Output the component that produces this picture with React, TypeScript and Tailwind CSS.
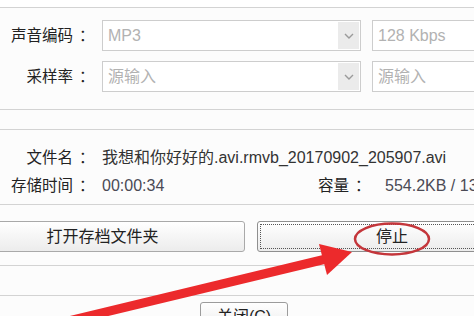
import React from 'react';

const font = { fontFamily: '"Liberation Sans", "Noto Sans CJK SC", sans-serif' };

const Chevron: React.FC = () => (
  <svg width="10" height="6" viewBox="0 0 10 6" fill="none">
    <path d="M1 1l4 4 4-4" stroke="#9a9a9a" strokeWidth="1.4" />
  </svg>
);

interface SelectProps {
  value: string;
  width: string;
  arrow?: boolean;
}

const FakeSelect: React.FC<SelectProps> = ({ value, width, arrow }) => (
  <div className={`${width} h-[31px] shrink-0 flex items-center border border-[#cdcdcd] bg-white`}>
    <span className="flex-1 pl-[5px] text-[16px] text-[#b2b2b2] whitespace-nowrap">{value}</span>
    {arrow && (
      <div className="w-[21px] h-[27px] mr-[1px] flex items-center justify-center bg-[#ebebeb]">
        <Chevron />
      </div>
    )}
  </div>
);

const Label: React.FC<{ text: string }> = ({ text }) => (
  <div className="w-[94px] shrink-0 flex justify-end text-[15.5px] text-[#222] whitespace-nowrap">
    <span>{text}</span>
    <span className="ml-[6px] w-[15px]">：</span>
  </div>
);

const App: React.FC = () => {
  return (
    <div className="relative w-[474px] h-[316px] overflow-hidden bg-[#fcfcfc]" style={font}>
      {/* top strip */}
      <div className="h-[8px] border-b border-[#d3d3d3] bg-white" />

      {/* audio settings */}
      <div className="h-[102px] border-b border-[#d3d3d3] pt-[12px] flex flex-col gap-[10px]">
        <div className="flex items-center">
          <Label text="声音编码" />
          <div className="ml-[8px] flex gap-[11px]">
            <FakeSelect value="MP3" width="w-[259px]" arrow />
            <FakeSelect value="128 Kbps" width="w-[140px]" />
          </div>
        </div>
        <div className="flex items-center">
          <Label text="采样率" />
          <div className="ml-[8px] flex gap-[11px]">
            <FakeSelect value="源输入" width="w-[259px]" arrow />
            <FakeSelect value="源输入" width="w-[140px]" />
          </div>
        </div>
      </div>

      <div className="h-[20px] border-b border-[#d3d3d3]" />

      {/* file info */}
      <div className="h-[75px] border-b border-[#d3d3d3] pt-[14px]">
        <div className="h-[28px] flex items-center">
          <Label text="文件名" />
          <span className="ml-[8px] text-[16px] text-[#333] whitespace-nowrap">
            我想和你好好的.avi.rmvb_20170902_205907.avi
          </span>
        </div>
        <div className="h-[28px] flex items-center">
          <Label text="存储时间" />
          <span className="ml-[8px] w-[216px] shrink-0 text-[16px] text-[#4a4a55] whitespace-nowrap">00:00:34</span>
          <span className="text-[15.5px] text-[#222] whitespace-nowrap">容量</span>
          <span className="ml-[6px] w-[15px] shrink-0 text-[15.5px] text-[#222]">：</span>
          <span className="ml-[15px] text-[16px] text-[#4a4a55] whitespace-nowrap">554.2KB / 13</span>
        </div>
      </div>

      {/* buttons */}
      <div className="h-[61px] border-b border-[#d3d3d3] pt-[16px] flex gap-[12px]">
        <button className="-ml-[40px] w-[285px] h-[31px] shrink-0 rounded-[3px] border border-[#a9a9a9] bg-gradient-to-b from-white to-[#ececec] text-[16px] text-[#222]">
          打开存档文件夹
        </button>
        <button className="w-[270px] h-[31px] shrink-0 rounded-[3px] border border-[#8f8f8f] bg-gradient-to-b from-white to-[#ececec] p-[2px]">
          <div className="w-full h-full border border-dotted border-[#555] flex items-center justify-center text-[16px] text-[#222]">
            停止
          </div>
        </button>
      </div>

      <div className="h-[30px] border-b border-[#d3d3d3]" />

      {/* close */}
      <div className="pt-[6px] pl-[200px]">
        <button className="w-[88px] h-[26px] rounded-[3px] border border-[#9c9c9c] bg-gradient-to-b from-white to-[#eeeeee] text-[16px] text-[#222] flex items-start justify-center pt-[2px]">
          关闭(C)
        </button>
      </div>

      {/* red annotation */}
      <svg className="absolute inset-0 pointer-events-none" width="474" height="316" viewBox="0 0 474 316">
        <ellipse cx="392" cy="239" rx="37" ry="15.5" fill="none" stroke="#c4363b" strokeWidth="2.5" />
        <line x1="60" y1="323" x2="326" y2="259" stroke="#ec2a2c" strokeWidth="9" />
        <polygon points="352,252 319,244 327,275" fill="#ec2a2c" />
      </svg>
    </div>
  );
};

export default App;
